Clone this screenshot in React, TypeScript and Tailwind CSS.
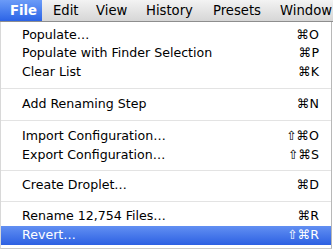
import React from "react";

type Item = { label: string; sc: string; hl?: boolean } | { sep: string };

const items: Item[] = [
  { label: "Populate…", sc: "⌘O" },
  { label: "Populate with Finder Selection", sc: "⌘P" },
  { label: "Clear List", sc: "⌘K" },
  { sep: "h-[13px]" },
  { label: "Add Renaming Step", sc: "⌘N" },
  { sep: "h-[14px]" },
  { label: "Import Configuration…", sc: "⇧⌘O" },
  { label: "Export Configuration…", sc: "⇧⌘S" },
  { sep: "h-[11.5px]" },
  { label: "Create Droplet…", sc: "⌘D" },
  { sep: "h-[12.5px]" },
  { label: "Rename 12,754 Files…", sc: "⌘R" },
  { label: "Revert…", sc: "⇧⌘R", hl: true },
];

export default function App() {
  return (
    <div
      className="w-[333px] h-[249px] overflow-hidden bg-white relative"
      style={{ fontFamily: '"DejaVu Sans", sans-serif' }}
    >
      <div className="h-[22px] flex items-center text-[13.2px] text-black bg-gradient-to-b from-[#f3f3f3] to-[#d6d6d6] border-b border-[#8e8e8e] whitespace-nowrap">
        <div className="h-full w-[42px] shrink-0 flex items-center pl-[10px] text-white font-bold bg-gradient-to-b from-[#6b9bf7] to-[#2c63e6]">
          File
        </div>
        <div className="ml-[11px] w-[43px] shrink-0">Edit</div>
        <div className="w-[50px] shrink-0">View</div>
        <div className="w-[67px] shrink-0">History</div>
        <div className="w-[67px] shrink-0">Presets</div>
        <div className="shrink-0">Window</div>
      </div>
      <div className="w-[332px] border-r border-b border-l border-l-[#d8d8d8] border-r-[#b8b8b8] border-b-[#c8c8c8] pt-[3.7px] pb-[3px] text-[12.6px] text-black bg-white">
        {items.map((it, i) =>
          "sep" in it ? (
            <div key={i} className={`${it.sep} flex items-center`}>
              <div className="w-full h-px bg-[#e3e3e3]" />
            </div>
          ) : (
            <div
              key={i}
              className={`h-[18.7px] flex items-center pl-[21px] pr-[12px] ${
                it.hl ? "bg-gradient-to-b from-[#628ff2] to-[#2d60e2] text-white" : ""
              }`}
            >
              <span className="flex-1 whitespace-nowrap">{it.label}</span>
              <span className="whitespace-nowrap">{it.sc}</span>
            </div>
          )
        )}
      </div>
    </div>
  );
}
